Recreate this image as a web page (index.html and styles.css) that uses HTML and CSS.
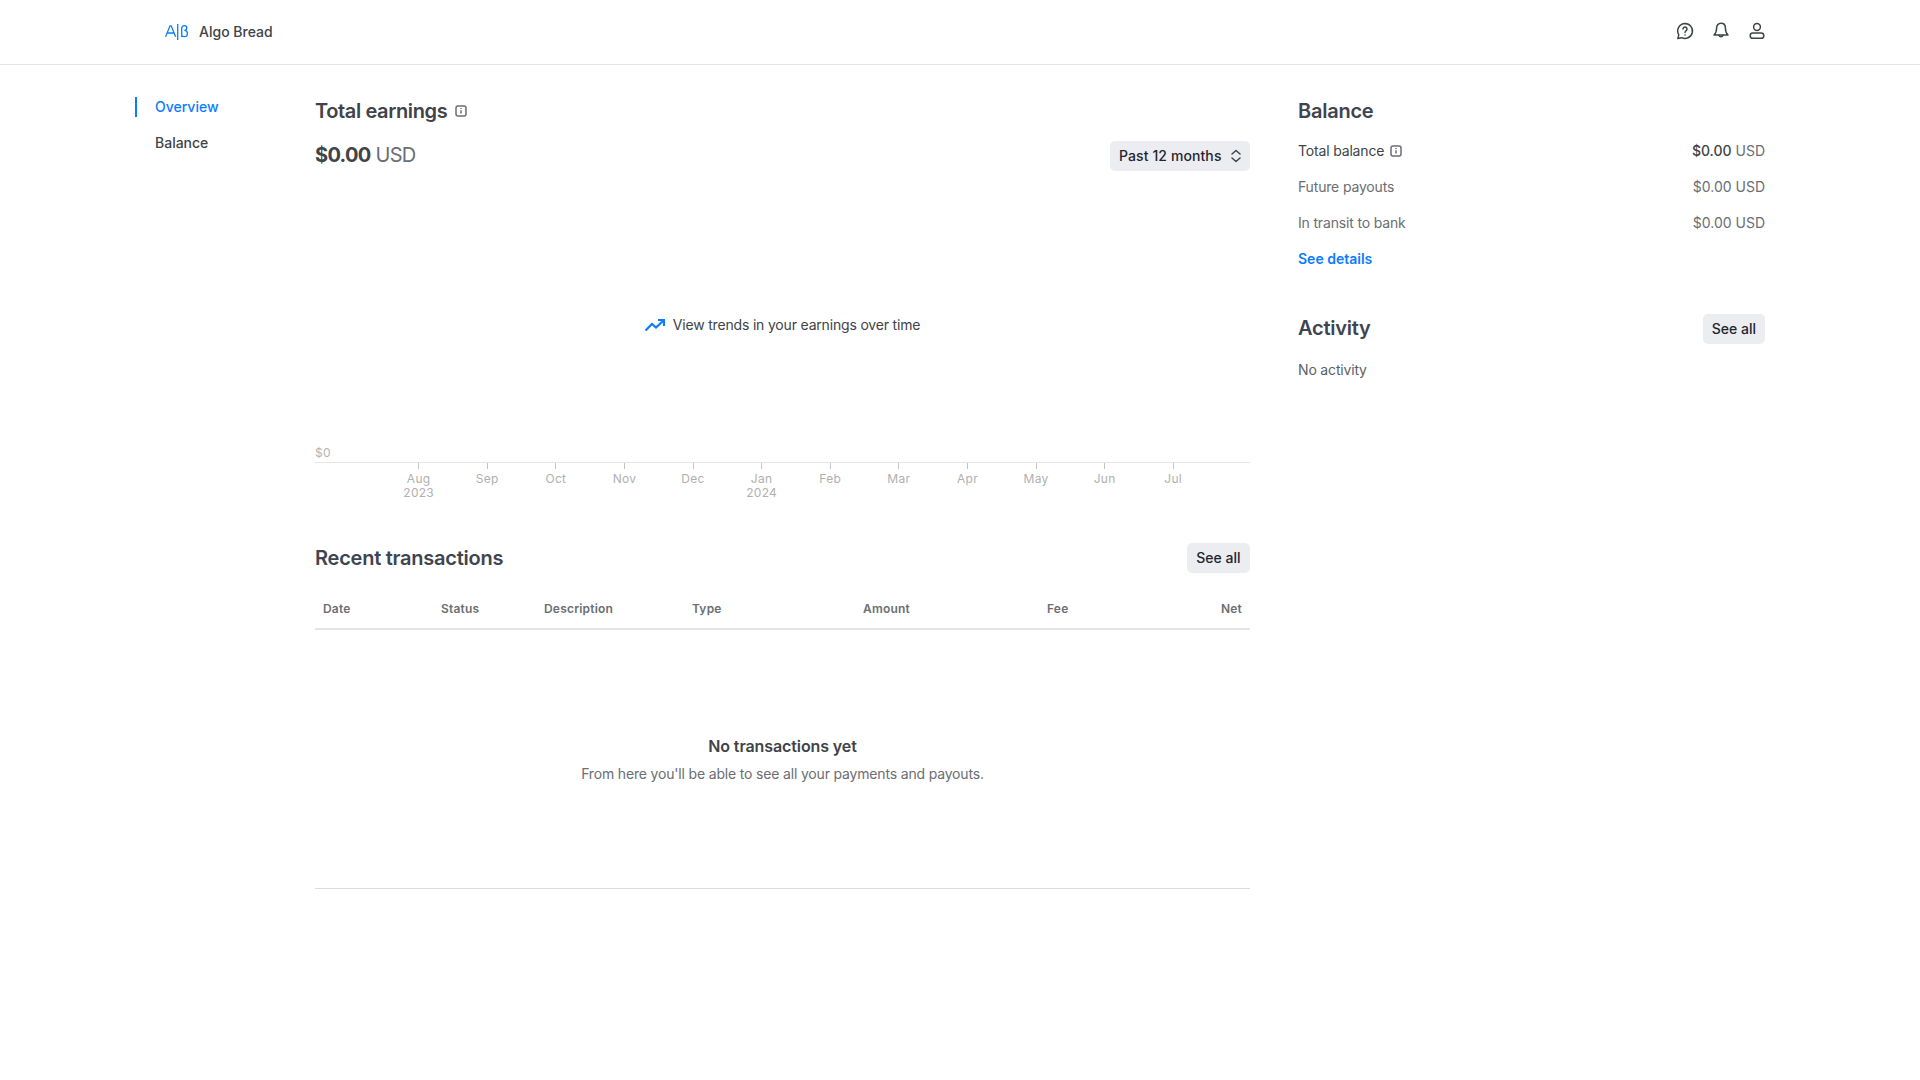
FILE: index.html
```html
<!DOCTYPE html>
<html lang="en">
<head>
<meta charset="utf-8">
<title>Algo Bread</title>
<link rel="stylesheet" href="styles.css">
</head>
<body>
<header class="topbar">
  <div class="brand">
    <svg class="logo" width="24" height="16" viewBox="0 0 24 16" fill="none" stroke="#0a7cff" stroke-width="1.300">
      <path d="M.6 12.800 5 1.800h1.200l4.400 11M2.200 9h6.800"/>
      <path d="M12.700 0v16"/>
      <path d="M16.700 13V4.200c0-1.600 1-2.500 2.600-2.500s2.500.9 2.500 2.200-1 2.400-2.500 2.500c2 0 3.100 1.100 3.100 3s-1.200 3.200-3.100 3.200c-.9 0-1.700-.2-2.600-.7"/>
    </svg>
    <span class="brand-name">Algo Bread</span>
  </div>
  <div class="top-icons">
    <svg width="20" height="20" viewBox="0 0 20 20" fill="none" stroke="#404347" stroke-width="1.500" stroke-linecap="round" stroke-linejoin="round"><path d="M10 2.500a7.500 7.500 0 1 1-3.400 14.200L2.800 17.600l1-3.700A7.500 7.500 0 0 1 10 2.500Z"/><path d="M8 8a2 2 0 1 1 3.200 1.600c-.7.500-1.200.9-1.200 1.800"/><path d="M10 13.900v.1"/></svg>
    <svg width="20" height="20" viewBox="0 0 20 20" fill="none" stroke="#404347" stroke-width="1.500" stroke-linecap="round" stroke-linejoin="round"><path d="M10 2.300c-2.700 0-4.400 2-4.400 4.600 0 3.700-.6 5.300-2.600 7.100h14c-2-1.800-2.600-3.400-2.600-7.100 0-2.600-1.700-4.600-4.400-4.600Z"/><path d="M8 14.300a2.100 2.100 0 0 0 4 0"/></svg>
    <svg width="20" height="20" viewBox="0 0 20 20" fill="none" stroke="#404347" stroke-width="1.500" stroke-linecap="round" stroke-linejoin="round"><circle cx="10" cy="6" r="3.400"/><rect x="3.200" y="12" width="13.600" height="5.300" rx="2.650"/></svg>
  </div>
</header>

<div class="layout">
  <nav class="sidenav">
    <a class="nav-item nav-active">Overview</a>
    <a class="nav-item">Balance</a>
  </nav>

  <main class="center">
    <div class="title-row">
      <h2 class="h-title">Total earnings</h2>
      <svg class="info" width="12" height="12" viewBox="0 0 12 12" fill="none" stroke="#6b6e73" stroke-width="1.500"><rect x="1" y="1" width="10" height="10" rx="2"/><path d="M6 5.200v3.300M6 3v1"/></svg>
    </div>
    <div class="amount-row">
      <div class="amount"><strong>$0.00</strong> <span class="unit">USD</span></div>
      <button class="btn btn-select">Past 12 months
        <svg width="10" height="14" viewBox="0 0 10 14" fill="none" stroke="#3e4450" stroke-width="1.500" stroke-linecap="round" stroke-linejoin="round"><path d="M1 5 5 1.500 9 5M1 9l4 3.500L9 9"/></svg>
      </button>
    </div>

    <section class="chart">
      <div class="chart-msg">
        <svg width="20" height="12" viewBox="0 0 20 12" fill="none" stroke="#0a7cff" stroke-width="2.200"><path d="M.5 11.500 7 5l4 3.500L18.500 1.500"/><path d="M13 1h6v6"/></svg>
        <span>View trends in your earnings over time</span>
      </div>
      <div class="y-label">$0</div>
      <div class="axis">
        <div class="tick"><i></i><span>Aug<br>2023</span></div>
        <div class="tick"><i></i><span>Sep</span></div>
        <div class="tick"><i></i><span>Oct</span></div>
        <div class="tick"><i></i><span>Nov</span></div>
        <div class="tick"><i></i><span>Dec</span></div>
        <div class="tick"><i></i><span>Jan<br>2024</span></div>
        <div class="tick"><i></i><span>Feb</span></div>
        <div class="tick"><i></i><span>Mar</span></div>
        <div class="tick"><i></i><span>Apr</span></div>
        <div class="tick"><i></i><span>May</span></div>
        <div class="tick"><i></i><span>Jun</span></div>
        <div class="tick"><i></i><span>Jul</span></div>
      </div>
    </section>

    <section class="recent">
      <div class="section-head">
        <h2 class="h-title">Recent transactions</h2>
        <button class="btn btn-wide">See all</button>
      </div>
      <div class="thead">
        <span class="c-date">Date</span>
        <span class="c-status">Status</span>
        <span class="c-desc">Description</span>
        <span class="c-type">Type</span>
        <span class="c-amount">Amount</span>
        <span class="c-fee">Fee</span>
        <span class="c-net">Net</span>
      </div>
      <div class="empty">
        <div class="empty-title">No transactions yet</div>
        <div class="empty-sub">From here you'll be able to see all your payments and payouts.</div>
      </div>
    </section>
  </main>

  <aside class="side">
    <h2 class="h-title side-title">Balance</h2>
    <div class="kv kv-strong">
      <span class="kv-label">Total balance
        <svg class="info" width="12" height="12" viewBox="0 0 12 12" fill="none" stroke="#6b6e73" stroke-width="1.500"><rect x="1" y="1" width="10" height="10" rx="2"/><path d="M6 5.200v3.300M6 3v1"/></svg>
      </span>
      <span><b>$0.00</b> <em>USD</em></span>
    </div>
    <div class="kv"><span class="kv-name">Future payouts</span><span>$0.00 USD</span></div>
    <div class="kv"><span class="kv-name">In transit to bank</span><span>$0.00 USD</span></div>
    <a class="link">See details</a>

    <div class="section-head activity-head">
      <h2 class="h-title activity-title">Activity</h2>
      <button class="btn">See all</button>
    </div>
    <p class="no-activity">No activity</p>
  </aside>
</div>
</body>
</html>
```

FILE: styles.css
```css
* { box-sizing: border-box; }
html, body { margin: 0; padding: 0; background: #fff; }
body {
  font-family: Inter, "Liberation Sans", sans-serif;
  font-size: 14px;
  line-height: 20px;
  color: #404347;
  height: 1080px;
  overflow: hidden;
}
.topbar {
  height: 65px;
  border-bottom: 1px solid #e1e5ea;
  display: flex;
  align-items: center;
  justify-content: space-between;
  padding: 0 153px 0 165px;
}
.brand { display: flex; align-items: center; gap: 10px; }
.logo { display: block; }
.brand-name { font-weight: 500; font-size: 14px; }
.top-icons { display: flex; gap: 16px; margin-bottom: 2px; }
.top-icons svg { display: block; }

.layout { display: flex; padding: 32px 155px 0 135px; }
.sidenav { width: 180px; flex: none; display: flex; flex-direction: column; gap: 16px; }
.nav-item {
  display: block;
  height: 20px;
  padding-left: 18px;
  font-weight: 500;
  border-left: 2px solid transparent;
}
.nav-active { color: #0a7cff; border-left-color: #0a7cff; }

.center { width: 935px; flex: none; }
.side { width: 467px; flex: none; margin-left: 48px; }

.h-title { margin: 0; font-size: 20px; line-height: 28px; font-weight: 600; color: #3e4450; letter-spacing: -.24px; }
.title-row { display: flex; align-items: center; gap: 8px; }
.title-row .h-title { color: #404347; letter-spacing: -.38px; }
.info { display: inline-block; vertical-align: -2px; }

.amount-row { display: flex; justify-content: space-between; align-items: center; margin-top: 16px; height: 30px; }
.amount { font-size: 20px; line-height: 28px; letter-spacing: -.7px; margin-bottom: 2px; }
.amount strong { font-weight: 700; color: #404347; }
.unit { color: #6b6e73; font-weight: 400; }

.btn {
  font: 500 14px/20px Inter, "Liberation Sans", sans-serif;
  color: #1f2530;
  background: #ebedf0;
  border: 0;
  border-radius: 5px;
  height: 30px;
  padding: 0 9px;
  display: inline-flex;
  align-items: center;
}
.btn-wide { padding: 0 9.500px; }
.btn-select { width: 140px; justify-content: space-between; letter-spacing: .1px; }
.btn-select svg { display: block; }

.chart { position: relative; height: 372px; }
.chart-msg {
  position: absolute;
  left: 0; right: 0; top: 144px;
  display: flex; justify-content: center; align-items: center; gap: 8px;
  letter-spacing: -.18px;
}
.chart-msg svg { display: block; }
.y-label {
  position: absolute; left: 0; top: 274px;
  font-size: 12px; line-height: 16px; color: #b4b4b4;
  letter-spacing: .3px;
}
.axis {
  position: absolute; left: 0; right: 0; top: 291px;
  border-top: 1px solid #e6e6e6;
  display: flex;
  padding-left: 69.400px;
}
.tick { width: 68.600px; flex: none; display: flex; flex-direction: column; align-items: center; }
.tick i { display: block; width: 1px; height: 6px; background: #c4c4c4; }
.tick span {
  margin-top: 3px;
  font-size: 12px; line-height: 14px; color: #b0b0b0; text-align: center;
  letter-spacing: .3px;
}

.section-head { display: flex; justify-content: space-between; align-items: center; }
.recent .section-head { height: 30px; }

.thead {
  display: grid;
  grid-template-columns: 118px 103px 148px 171px 184px 1fr 40px;
  margin-top: 26px;
  padding: 0 8px;
  height: 31px;
  line-height: 20px;
  border-bottom: 2px solid #e4e4e4;
  font-size: 12px;
  font-weight: 600;
  letter-spacing: .2px;
  color: #6b6e73;
}
.c-net { text-align: right; }

.empty {
  height: 259px;
  border-bottom: 1px solid #dcdcdc;
  padding-top: 104px;
  text-align: center;
}
.empty-title { font-size: 16px; line-height: 24px; font-weight: 600; color: #404347; letter-spacing: -.1px; }
.empty-sub { margin-top: 6px; color: #6b6e73; letter-spacing: -.17px; }

.side-title { margin-bottom: 16px; }
.kv {
  display: flex; justify-content: space-between; align-items: center;
  height: 20px; margin-bottom: 16px; color: #6b6e73;
}
.kv-strong { color: #404347; }
.kv-label { display: inline-flex; align-items: center; gap: 6px; letter-spacing: -.17px; }
.kv-name { letter-spacing: -.17px; }
.kv b { font-weight: 500; }
.kv em { font-style: normal; color: #6b6e73; }
.link { display: block; color: #0a7cff; font-weight: 600; height: 20px; }
.activity-head { margin-top: 45px; height: 30px; }
.activity-title { margin-bottom: 2px; }
.no-activity { margin: 16px 0 0; color: #5c5f63; letter-spacing: -.17px; }
```
